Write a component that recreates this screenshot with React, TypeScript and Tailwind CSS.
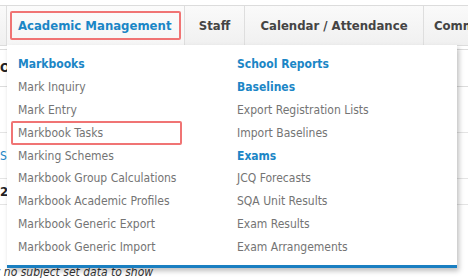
import React from 'react';

const markbooks = [
  'Mark Inquiry',
  'Mark Entry',
  'Markbook Tasks',
  'Marking Schemes',
  'Markbook Group Calculations',
  'Markbook Academic Profiles',
  'Markbook Generic Export',
  'Markbook Generic Import',
];

type Entry = { label: string; heading?: boolean };

const rightCol: Entry[] = [
  { label: 'School Reports', heading: true },
  { label: 'Baselines', heading: true },
  { label: 'Export Registration Lists' },
  { label: 'Import Baselines' },
  { label: 'Exams', heading: true },
  { label: 'JCQ Forecasts' },
  { label: 'SQA Unit Results' },
  { label: 'Exam Results' },
  { label: 'Exam Arrangements' },
];

function Item({ label, heading, marked }: Entry & { marked?: boolean }) {
  return (
    <div className={`relative h-[22.9px] flex items-center whitespace-nowrap ${heading ? 'font-bold text-[#1b86c6]' : 'text-[#747474]'}`}>
      {marked && <div className="absolute -left-[7px] top-[-0.5px] w-[171px] h-[24px] border-2 border-[#f07474] rounded-[2px]" />}
      <span>{label}</span>
    </div>
  );
}

export default function App() {
  return (
    <div className="relative w-[468px] h-[278px] bg-white overflow-hidden text-[12px]" style={{ fontFamily: '"DejaVu Sans Condensed", "DejaVu Sans", Verdana, sans-serif' }}>
      {/* page behind the menu */}
      <div className="h-[5px]" />
      <nav className="flex h-[41px] border-t border-b border-[#dcdcdc] bg-gradient-to-b from-[#fafafa] to-[#f0f0f0] text-[13px] font-bold text-[#444] whitespace-nowrap">
        <div className="w-[7px] shrink-0 border-r border-[#dedede]" />
        <div className="w-[178px] shrink-0 border-r border-[#dedede] bg-gradient-to-b from-[#fbfbfb] to-[#f6f6f6] px-[3px] py-[5px]">
          <div className="h-full border-2 border-[#f07474] rounded-[2px] flex items-center pl-[6px] text-[#1b86c6]">
            Academic Management
          </div>
        </div>
        <div className="w-[60px] shrink-0 border-r border-[#dedede] flex items-center justify-center">Staff</div>
        <div className="w-[179px] shrink-0 border-r border-[#dedede] flex items-center justify-center">Calendar / Attendance</div>
        <div className="flex items-center pl-[10px]">Communications</div>
      </nav>

      <div className="flex flex-col pt-[3px] whitespace-nowrap">
        <div className="h-[38px] border-t border-b border-[#dcdcdc] flex items-center font-bold text-[#222] text-[13px]">Overview</div>
        <div className="h-[46px] border-b border-[#e4e4e4]" />
        <div className="h-[46px] border-b border-[#e4e4e4] flex items-center text-[#1b86c6]">Summary</div>
        <div className="h-[26px] border-b border-[#e4e4e4] flex items-center font-bold text-[#222] text-[13px]">2023</div>
        <div className="h-[60px]" />
        <div className="italic text-[#333] -ml-[6px] leading-[14px]">y no subject set data to show</div>
      </div>

      {/* dropdown */}
      <div className="absolute left-[7px] top-[45px] w-[450px] h-[223px] bg-white border-b-[3px] border-[#1a7fc1] shadow-[2px_3px_5px_rgba(0,0,0,0.25)] flex pl-[11px] pt-[7.5px]">
        <div className="w-[219px]">
          <Item label="Markbooks" heading />
          {markbooks.map(m => (
            <Item key={m} label={m} marked={m === 'Markbook Tasks'} />
          ))}
        </div>
        <div className="flex-1">
          {rightCol.map(e => (
            <Item key={e.label} {...e} />
          ))}
        </div>
      </div>
    </div>
  );
}
